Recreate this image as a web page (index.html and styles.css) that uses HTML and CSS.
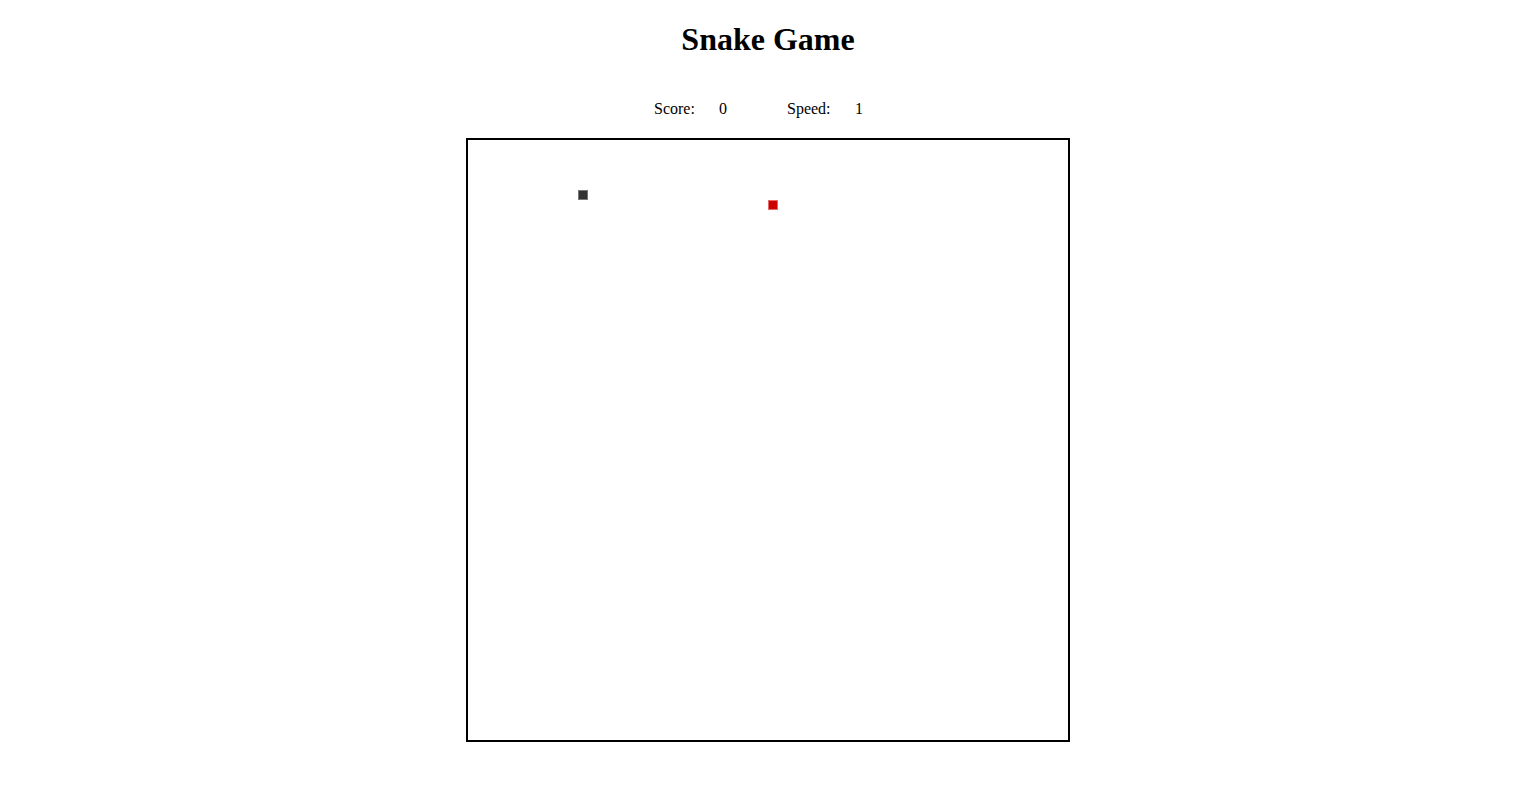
FILE: index.html
```html
<!DOCTYPE html>
<html>
<head>
<meta charset="utf-8">
<title>Snake Game</title>
<link rel="stylesheet" href="styles.css">
</head>
<body>
<h1 class="title">Snake Game</h1>
<div class="stats">
  <span class="label label-score">Score:</span>
  <span class="value value-score">0</span>
  <span class="label label-speed">Speed:</span>
  <span class="value value-speed">1</span>
</div>
<div class="board">
  <div class="cell snake" style="left:110px;top:50px"></div>
  <div class="cell food" style="left:300px;top:60px"></div>
</div>
</body>
</html>
```
FILE: styles.css
```css
html, body {
  background: #fff;
}
body {
  margin: 0 8px;
  font-family: "Liberation Serif", "Times New Roman", serif;
  color: #000;
}
.title {
  font-size: 32px;
  font-weight: bold;
  text-align: center;
  margin: 21.44px 0;
  line-height: normal;
}
.stats {
  display: grid;
  grid-template-columns: 65px 68px 68px 27px;
  justify-content: center;
  padding: 20px 0;
  font-size: 16px;
  line-height: normal;
}
.board {
  position: relative;
  width: 600px;
  height: 600px;
  border: 2px solid #000;
  margin: 0 auto;
  background: #fff;
}
.cell {
  position: absolute;
  width: 10px;
  height: 10px;
  box-sizing: border-box;
}
.snake {
  background: #333;
  border: 1px solid #777;
}
.food {
  background: #c00;
  border: 1px solid #e46a6a;
}
```
